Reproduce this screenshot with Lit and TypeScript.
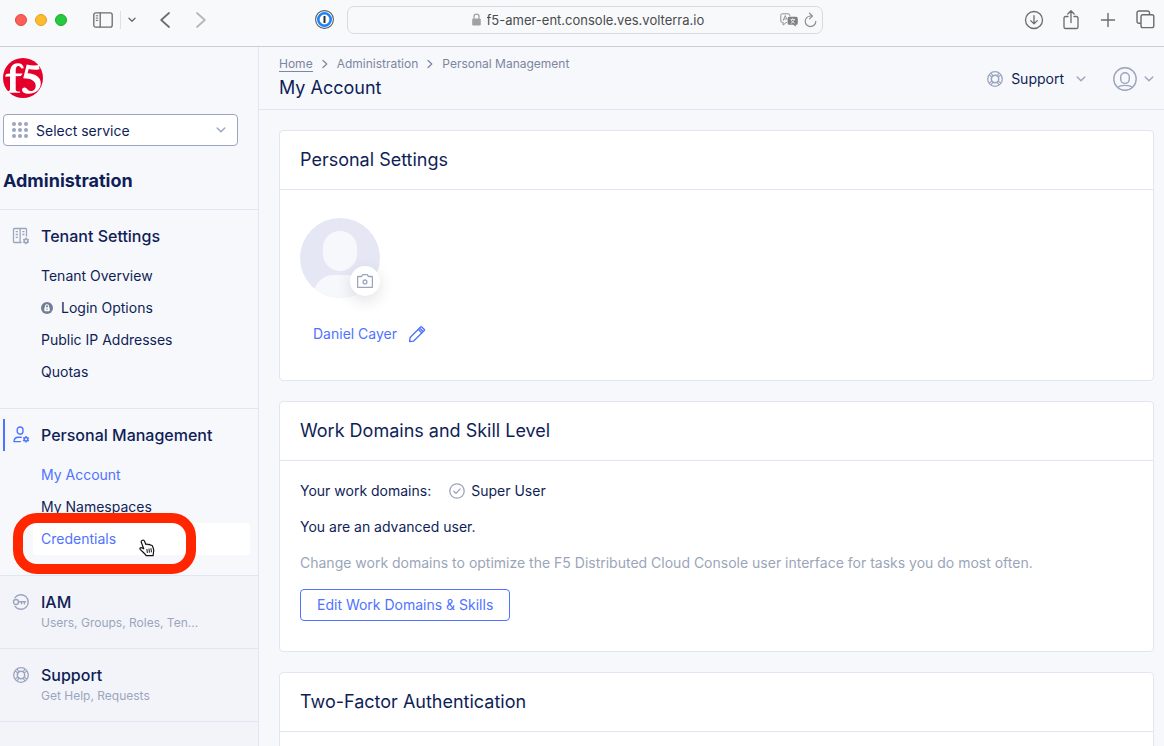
import { LitElement, html, css, svg } from "lit";
import { customElement, state } from "lit/decorators.js";
import { classMap } from "lit/directives/class-map.js";

const chevronDown = html`<svg class="chev" width="10" height="6" viewBox="0 0 10 6" fill="none" stroke="currentColor" stroke-width="1.4" stroke-linecap="round" stroke-linejoin="round" aria-hidden="true"><path d="M1.2 1 5 4.8 8.8 1" /></svg>`;

const gear = svg`<path d="M13 9.6v1.1M13 15.1v1.1M10.2 11.3l.9.5M14.9 13.9l.9.6M10.2 14.5l.9-.6M14.9 11.8l.9-.5" stroke-width="1.5" stroke-linecap="butt" /><circle cx="13" cy="12.9" r="1.8" stroke-width="1.5" />`;

const icons = {
  tenant: html`<svg width="18" height="18" viewBox="0 0 18 18" fill="none" stroke="currentColor" stroke-width="1.3" aria-hidden="true"><path d="M14.5 9.400V2.300a.8.8 0 0 0-.8-.8H2.300a.8.8 0 0 0-.8.8v12.400a.8.8 0 0 0 .8.8h7.300M8.100 1.500v14M3.700 4.700h2.200M3.700 7.500h2.200M3.700 10.300h2.200M10.300 4.700h2.200M10.300 7.500h2.200" /><g transform="translate(1 1)">${gear}</g></svg>`,
  person: html`<svg width="18" height="18" viewBox="0 0 18 18" fill="none" stroke="currentColor" stroke-width="1.4" stroke-linecap="round" aria-hidden="true"><rect x="5.200" y="1" width="5.800" height="7.200" rx="2.900" /><path d="M2 15.600h6.400M2 15.600c.2-3 2-4.400 4.300-4.400h3" /><g transform="translate(1 .4)">${gear}</g></svg>`,
  key: html`<svg width="18" height="18" viewBox="0 0 18 18" fill="none" stroke="currentColor" stroke-width="1.4" stroke-linecap="round" aria-hidden="true"><path d="M3 4.700A7.300 7.300 0 1 1 3 13.300" /><circle cx="4" cy="9" r="2.500" /><path d="M6.600 8.700h6.900M9.600 8.900v1.900M12.400 8.900v1.900" /></svg>`,
  ring: html`<svg width="18" height="18" viewBox="0 0 18 18" fill="none" stroke="currentColor" stroke-width="1.3" aria-hidden="true"><circle cx="9" cy="9" r="7.300" /><circle cx="9" cy="9" r="3.700" stroke-width="1.500" /><path d="M4.800 2.900 7 5.900M2.900 4.800 5.900 7M13.200 2.900 11 5.900M15.100 4.800 12.100 7M4.800 15.100 7 12.100M2.900 13.200 5.900 11M13.200 15.100 11 12.100M15.100 13.200 12.100 11" stroke-width="1.100" /></svg>`,
};

interface NavItem { label: string; locked?: boolean; }
interface NavSection { title: string; icon: keyof typeof icons; items?: NavItem[]; summary?: string; }

const SECTIONS: NavSection[] = [
  { title: "Tenant Settings", icon: "tenant", items: [{ label: "Tenant Overview" }, { label: "Login Options", locked: true }, { label: "Public IP Addresses" }, { label: "Quotas" }] },
  { title: "Personal Management", icon: "person", items: [{ label: "My Account" }, { label: "My Namespaces" }, { label: "Credentials" }] },
  { title: "IAM", icon: "key", summary: "Users, Groups, Roles, Ten..." },
  { title: "Support", icon: "ring", summary: "Get Help, Requests" },
];

const base = css`
  :host, * { box-sizing: border-box; }
  button { font: inherit; color: inherit; background: none; border: 0; padding: 0; cursor: pointer; }
  a { color: inherit; text-decoration: none; }
  svg { display: block; flex: none; }
`;

@customElement("browser-toolbar")
class BrowserToolbar extends LitElement {
  static styles = [base, css`
    :host { display: block; }
    .bar { display: grid; grid-template-columns: 1fr minmax(0, 476px) 1fr; align-items: center; height: 47px; padding: 0 9px 7px 15px; border-bottom: 1px solid #ccced1; background: #f8f9fb; color: #6b6c6e; }
    .side { display: flex; align-items: center; }
    .lights { display: flex; gap: 8px; }
    .light { width: 12px; height: 12px; border-radius: 50%; border: 1px solid #e2463f; background: #fe5f57; }
    .light.min { background: #febb2e; border-color: #e0a02a; }
    .light.max { background: #28c840; border-color: #1aab29; }
    .panel { margin-left: 26px; }
    .rule { width: 1px; height: 18px; margin: 0 7px; background: #dfe0e3; }
    .back { margin-left: 24px; }
    .forward { margin-left: 26px; color: #b4b5b8; }
    .vault { margin: 0 13px 0 auto; }
    .address { display: flex; align-items: center; justify-content: center; position: relative; height: 28px; border: 1px solid #d9dadd; border-radius: 7px; }
    .address label { display: flex; align-items: center; gap: 6px; padding-left: 8px; color: #a0a1a3; }
    .url { width: 220px; height: 20px; padding: 0; border: 0; outline: 0; background: none; color: #4a4b4d; font: 13px/20px Inter, sans-serif; }
    .tools { display: flex; align-items: center; gap: 6px; position: absolute; right: 5px; color: #8e8f91; }
    .right { justify-content: flex-end; gap: 18px; }
  `];

  render() {
    return html`<div class="bar">
      <div class="side">
        <div class="lights"><span class="light"></span><span class="light min"></span><span class="light max"></span></div>
        <button class="panel" aria-label="Sidebar"><svg width="20" height="16" viewBox="0 0 20 16" fill="none" stroke="currentColor" stroke-width="1.300"><rect x=".8" y=".8" width="18.400" height="14.400" rx="2" /><path d="M7.200.8v14.400" /><path d="M2.800 3.800h2.400M2.800 6.100h2.400M2.800 8.400h2.400" stroke-width="1" /></svg></button>
        <span class="rule"></span>
        <button aria-label="Tab groups"><svg width="8" height="6" viewBox="0 0 8 6" fill="none" stroke="currentColor" stroke-width="1.400" stroke-linecap="round" stroke-linejoin="round"><path d="M1 1.200 4 4.200 7 1.200" /></svg></button>
        <button class="back" aria-label="Back"><svg width="10" height="16" viewBox="0 0 10 16" fill="none" stroke="currentColor" stroke-width="1.700" stroke-linecap="round" stroke-linejoin="round"><path d="M9 1 1.200 8 9 15" /></svg></button>
        <button class="forward" aria-label="Forward"><svg width="10" height="16" viewBox="0 0 10 16" fill="none" stroke="currentColor" stroke-width="1.700" stroke-linecap="round" stroke-linejoin="round"><path d="M1 1 8.800 8 1 15" /></svg></button>
        <button class="vault" aria-label="Passwords"><svg width="19" height="19" viewBox="0 0 19 19"><circle cx="9.500" cy="9.500" r="8.900" fill="#fff" stroke="#55585c" stroke-width="1.100" /><circle cx="9.500" cy="9.500" r="6.200" fill="#fff" stroke="#1a84f5" stroke-width="2.600" /><rect x="8.500" y="6" width="2" height="7" rx=".5" fill="#2b2c2e" /></svg></button>
      </div>
      <div class="address">
        <label><svg width="9" height="13" viewBox="0 0 9 13"><rect x=".2" y="5.400" width="8.600" height="7" rx="1.200" fill="currentColor" /><path d="M2 5.800V3.600a2.500 2.500 0 0 1 5 0v2.200" fill="none" stroke="currentColor" stroke-width="1.300" /></svg>
          <input class="url" aria-label="Address" value="f5-amer-ent.console.ves.volterra.io" /></label>
        <div class="tools">
          <button aria-label="Translate"><svg width="18" height="14" viewBox="0 0 18 14"><path d="M7 9.500H6.200L3.200 12V9.500H2.400A1.600 1.600 0 0 1 .8 7.900V2.400A1.600 1.600 0 0 1 2.400.8h5.800a1.600 1.600 0 0 1 1.600 1.600v.8" fill="none" stroke="currentColor" /><path d="M3 7.800 5.200 2.600 6.800 6.400M3.800 6h2.600" fill="none" stroke="currentColor" stroke-width=".9" /><path d="M9.200 3.800h7a1.600 1.600 0 0 1 1.600 1.600v4.800a1.600 1.600 0 0 1-1.600 1.600h-.4v2l-2.400-2H9.200a1.600 1.600 0 0 1-1.600-1.600V5.400a1.600 1.600 0 0 1 1.600-1.600z" fill="#808183" /><path d="M10.400 6.400h4.600M12.700 5.300v1.100M14.300 6.400c-.5 1.900-1.700 3.100-3.600 3.900M11.200 6.900c.7 1.500 1.900 2.700 3.500 3.300" fill="none" stroke="#f8f9fb" stroke-width=".8" /></svg></button>
          <button aria-label="Reload"><svg width="13" height="16" viewBox="0 0 13 16" fill="none" stroke="currentColor" stroke-width="1.200" stroke-linecap="round" stroke-linejoin="round"><path d="M7.800 4H6.500a5.300 5.300 0 1 0 5.300 5.300M5.500 1.200 8.400 4 5.500 6.900" /></svg></button>
        </div>
      </div>
      <div class="side right">
        <button aria-label="Downloads"><svg width="20" height="20" viewBox="0 0 20 20" fill="none" stroke="currentColor" stroke-width="1.300" stroke-linecap="round" stroke-linejoin="round"><circle cx="10" cy="10" r="8.500" /><path d="M10 5.600v8M6.700 10.600 10 13.900l3.300-3.300" /></svg></button>
        <button aria-label="Share"><svg width="18" height="22" viewBox="0 0 18 22" fill="none" stroke="currentColor" stroke-width="1.300" stroke-linecap="round" stroke-linejoin="round"><path d="M6 7.500H3.600a1.600 1.600 0 0 0-1.600 1.600v8.800a1.600 1.600 0 0 0 1.600 1.600h10.800a1.600 1.600 0 0 0 1.600-1.600V9.100a1.600 1.600 0 0 0-1.600-1.600H12M9 13.500V2M5.800 5 9 1.800 12.200 5" /></svg></button>
        <button aria-label="New tab"><svg width="20" height="16" viewBox="0 0 20 16" fill="none" stroke="currentColor" stroke-width="1.400" stroke-linecap="round"><path d="M10 1.500v13M3.500 8h13" /></svg></button>
        <button aria-label="Tab overview"><svg width="19" height="19" viewBox="0 0 19 19" fill="none" stroke="currentColor" stroke-width="1.400"><path d="M4.800 13.300H2.900A1.900 1.900 0 0 1 1 11.400V2.900A1.900 1.900 0 0 1 2.900 1h8.700a1.900 1.900 0 0 1 1.900 1.900v1.600" /><rect x="5" y="4.800" width="12.800" height="12.800" rx="1.900" /></svg></button>
      </div>
    </div>`;
  }
}

@customElement("side-nav")
class SideNav extends LitElement {
  @state() private current = "My Account";
  @state() private pointed = "Credentials";

  static styles = [base, css`
    :host { display: flex; flex-direction: column; width: 259px; flex: none; border-right: 1px solid #e2e5f3; background: #f3f4f9; color: #0f1e57; font: 14px/20px Inter, sans-serif; overflow: hidden; }
    .top { padding: 11px 20px 14px 3px; background: #f7f8fb; }
    .picker { display: flex; align-items: center; height: 32px; margin: 16px 0 21px; padding: 0 11px 0 8px; border: 1px solid #9ba5bd; border-radius: 4px; background: #fff; color: #9ba5bd; }
    .picker select { flex: 1; min-width: 0; height: 30px; margin-left: 8px; padding: 2px 0 0; border: 0; outline: 0; appearance: none; background: none; color: #0f1e57; font: 14px/20px Inter, sans-serif; }
    h2 { margin: 0; font-size: 18px; line-height: 28px; font-weight: 700; }
    .section { border-top: 1px solid #e2e5f3; background: #f7f8fb; padding: 10px 0 20px; }
    .head { display: flex; align-items: center; width: 100%; height: 32px; margin-bottom: 8px; padding-left: 12px; gap: 11px; color: #9ba5bd; text-align: left; }
    .head.active { color: #4f73ff; margin-left: 3px; padding-left: 7px; border-left: 2px solid #4f73ff; }
    .title { display: block; color: #0f1e57; font-size: 16px; line-height: 22px; font-weight: 500; }
    .items { margin: 0; padding: 0 8px 0 33px; list-style: none; }
    .item { position: relative; }
    .link { display: flex; align-items: center; gap: 8px; height: 32px; padding-left: 8px; border-radius: 4px; }
    .link.current { color: #4f73ff; }
    .link.pointed { color: #4f73ff; background: #fff; }
    .marker { position: absolute; left: -20px; top: -10px; width: 183px; height: 61px; border: 10px solid #ff2600; border-radius: 24px; pointer-events: none; }
    .hand { position: absolute; left: 106px; top: 16px; pointer-events: none; }
    .folded { display: flex; gap: 11px; width: 100%; height: 73px; padding: 15px 12px; border-top: 1px solid #e2e5f3; color: #9ba5bd; text-align: left; }
    .folded svg { margin-top: 2px; }
    .summary { display: block; white-space: nowrap; font-size: 12px; line-height: 20px; color: #9ba5bd; }
    .rest { flex: 1; border-top: 1px solid #e2e5f3; }
  `];

  private item(i: NavItem) {
    const pointed = this.pointed === i.label;
    return html`<li class="item">
      <a href="#" class=${classMap({ link: true, current: this.current === i.label, pointed })}>
        ${i.locked ? html`<svg width="12" height="12" viewBox="0 0 12 12" aria-hidden="true"><circle cx="6" cy="6" r="6" fill="#737d96" /><rect x="3.300" y="5.300" width="5.400" height="3.900" rx=".7" fill="#fff" /><path d="M4.500 5.500V4.200a1.500 1.500 0 0 1 3 0v1.300" fill="none" stroke="#fff" stroke-width="1.100" /><circle cx="6" cy="7.200" r=".7" fill="#737d96" /></svg>` : ""}${i.label}</a>
      ${pointed ? html`<span class="marker"></span>
        <svg class="hand" width="17" height="18" viewBox="0 0 17 18" aria-hidden="true"><path d="M3.400 1.300c.9-.4 1.700.1 2.100 1l1.400 3.200c.7-.8 1.700-.6 2.200.2.700-.6 1.700-.4 2.200.5.900-.5 1.900.1 2.200 1 .7 2 1.800 3.700 1 6.100l-.4 3.400H7.200C6.200 14.700 3.300 12.600 1.200 10.300c-.7-.9.300-2 1.500-1.500l2 1L2.300 3.200c-.3-.8.200-1.600 1.100-1.900z" fill="#fff" stroke="#111" stroke-width="1.200" stroke-linejoin="round" /><path d="M7.900 10.400l.4 3.200M10 10l.4 3.300M12 9.600l.4 3.300" stroke="#111" stroke-linecap="round" /></svg>` : ""}
    </li>`;
  }

  private section(s: NavSection) {
    if (!s.items) {
      return html`<button class="folded">${icons[s.icon]}<span><span class="title">${s.title}</span><span class="summary">${s.summary}</span></span></button>`;
    }
    const active = s.items.some((i) => i.label === this.current);
    return html`<div class="section">
      <button class=${classMap({ head: true, active })}>${icons[s.icon]}<span class="title">${s.title}</span></button>
      <ul class="items">${s.items.map((i) => this.item(i))}</ul>
    </div>`;
  }

  render() {
    return html`
      <div class="top">
        <svg width="40" height="40" viewBox="0 0 40 40" role="img" aria-label="f5"><circle cx="20" cy="20" r="20" fill="#e4002b" /><path d="M20.800 10.200C20.300 6.800 18 5 14.500 5.200 9.300 5.500 7 9.200 7 14.600v.9L3 16.100l-.8 2.700L7 18.500v12.400c0 1.700-.6 2.200-3.400 2.600l1.200 1.300h12.300l-.1-1.200c-3.500-.4-4.300-.8-4.300-2.700V18.300l5.200-.2 1.700-2.600h-6.900v-2.700c0-3.200.9-4.900 2.600-4.900 1.800 0 2.400 1.500 3.100 2.700z" fill="#fff" /><path d="M23.700 6.400c4.600 1.100 8.300 1.300 12 .6l.9 4.300c-3.800.8-7.600.6-10.900-.3l-1.100 4.300c8 .5 13.400 4.200 13.200 10.100-.2 6.300-6 10.600-12.700 10.300-3.500-.2-6-1.500-6.100-3.500-.1-1.500 1.200-2.700 2.700-2.600 2.600.1 2.800 3.500 6 3.500 3 0 5-2.200 5-5.400 0-4.800-4.700-7.300-12.500-7.400z" fill="#fff" /></svg>
        <label class="picker">
          <svg width="16" height="16" viewBox="0 0 16 16" fill="currentColor" aria-hidden="true">${[2, 8, 14].map((y) => [2, 8, 14].map((x) => svg`<circle cx=${x} cy=${y} r="2" />`))}</svg>
          <select aria-label="Service"><option>Select service</option></select>
          ${chevronDown}
        </label>
        <h2>Administration</h2>
      </div>
      ${SECTIONS.map((s) => this.section(s))}
      <div class="rest"></div>`;
  }
}

@customElement("account-page")
class AccountPage extends LitElement {
  static styles = [base, css`
    :host { display: flex; flex-direction: column; flex: 1; min-width: 0; background: #f7f8fb; color: #0f1e57; font: 14px/20px Inter, sans-serif; }
    header { display: flex; justify-content: space-between; align-items: center; padding: 8px 10px 6px 20px; border-bottom: 1px solid #e2e5f3; }
    .crumbs { display: flex; align-items: center; gap: 9px; height: 18px; font-size: 12px; line-height: 14px; color: #7b86a0; }
    .crumbs .home { border-bottom: 1px solid #7b86a0; }
    h1 { margin: 0; font-size: 18px; line-height: 30px; font-weight: 400; }
    .menus { display: flex; align-items: center; gap: 27px; color: #9ba5bd; }
    .menu { display: flex; align-items: center; gap: 7px; color: #9ba5bd; }
    .menu span { color: #0f1e57; margin-right: 5px; }
    main { flex: 1; min-height: 0; display: flex; flex-direction: column; gap: 20px; padding: 20px 10px 20px 20px; overflow: auto; scrollbar-width: none; }
    .card { flex: none; border: 1px solid #e2e5f3; border-radius: 4px; background: #fff; }
    h3 { margin: 0; padding: 14px 20px; font-size: 18px; line-height: 30px; font-weight: 400; border-bottom: 1px solid #e2e5f3; }
    .body { padding: 20px 20px 30px; display: flex; flex-direction: column; align-items: flex-start; gap: 16px; }
    .profile { padding: 28px 20px 26px; }
    .portrait { position: relative; }
    .camera { position: absolute; right: 0; bottom: 2px; width: 30px; height: 30px; display: grid; place-items: center; border-radius: 50%; background: #fff; color: #9ba5bd; box-shadow: 0 5px 15px rgba(40, 45, 70, 0.14); }
    .name { display: flex; align-items: center; gap: 11px; height: 40px; padding: 0 13px; color: #4f73ff; }
    p { margin: 0; }
    .domains { display: flex; align-items: center; gap: 18px; }
    .domain { display: flex; align-items: center; gap: 6px; }
    .domain svg { color: #9ba5bd; }
    .muted { color: #9ba5b9; }
    .edit { height: 32px; padding: 0 16px; border: 1px solid #4f73ff; border-radius: 4px; background: #fff; color: #4f73ff; }
  `];

  render() {
    const sep = html`<svg width="6" height="10" viewBox="0 0 6 10" fill="none" stroke="currentColor" stroke-width="1.200" stroke-linecap="round" stroke-linejoin="round" aria-hidden="true"><path d="M1 1.500 4.800 5 1 8.500" /></svg>`;
    return html`
      <header>
        <div>
          <nav class="crumbs"><a href="#" class="home">Home</a>${sep}<a href="#">Administration</a>${sep}<a href="#">Personal Management</a></nav>
          <h1>My Account</h1>
        </div>
        <div class="menus">
          <button class="menu">${icons.ring}<span>Support</span>${chevronDown}</button>
          <button class="menu" aria-label="Account"><svg width="24" height="24" viewBox="0 0 24 24" fill="none" stroke="currentColor" stroke-width="1.400"><circle cx="12" cy="12" r="11.200" /><rect x="7.700" y="5.800" width="8.600" height="10.600" rx="4.300" /><path d="M4.800 20.400c1.500-1.700 3.600-2 7.200-2s5.700.3 7.200 2" /></svg>${chevronDown}</button>
        </div>
      </header>
      <main>
        <section class="card">
          <h3>Personal Settings</h3>
          <div class="body profile">
            <div class="portrait">
              <svg width="80" height="80" viewBox="0 0 80 80" role="img" aria-label="Profile picture"><defs><clipPath id="disc"><circle cx="40" cy="40" r="40" /></clipPath></defs><g clip-path="url(#disc)"><rect width="80" height="80" fill="#e5e8f4" /><rect x="23" y="13" width="34" height="40" rx="17" fill="#f7f8fb" /><path d="M12 80C14 64 24 57 34 57h12c10 0 20 7 22 23z" fill="#f7f8fb" /></g></svg>
              <button class="camera" aria-label="Change picture"><svg width="16" height="16" viewBox="0 0 16 16" fill="none" stroke="currentColor" stroke-width="1.300" stroke-linejoin="round"><path d="M1 3.500h3.600L5.800 1.600h4.400l1.200 1.900H15a.4.4 0 0 1 .4.400v10a.4.400 0 0 1-.4.400H1a.4.400 0 0 1-.4-.4v-10a.4.400 0 0 1 .4-.4z" /><circle cx="8" cy="8.900" r="1.900" /></svg></button>
            </div>
            <button class="name">Daniel Cayer<svg width="18" height="18" viewBox="0 0 18 18" fill="none" stroke="currentColor" stroke-width="1.400" stroke-linejoin="round" aria-hidden="true"><path d="M1.600 16.500l.5-4L12.600 1.900a.8.8 0 0 1 1.100 0l2.600 2.600a.8.8 0 0 1 0 1.100L5.700 16.100z" /><path d="M10.200 4.300l3.700 3.700M12 3.400l2.900 2.900" /></svg></button>
          </div>
        </section>
        <section class="card">
          <h3>Work Domains and Skill Level</h3>
          <div class="body">
            <div class="domains"><span>Your work domains:</span><span class="domain"><svg width="16" height="16" viewBox="0 0 16 16" fill="none" stroke="currentColor" stroke-width="1.300" stroke-linecap="round" stroke-linejoin="round" aria-hidden="true"><circle cx="8" cy="8" r="7.200" /><path d="M4.800 8.200 7 10.400 11.200 5.900" /></svg>Super User</span></div>
            <p>You are an advanced user.</p>
            <p class="muted">Change work domains to optimize the F5 Distributed Cloud Console user interface for tasks you do most often.</p>
            <button class="edit">Edit Work Domains &amp; Skills</button>
          </div>
        </section>
        <section class="card">
          <h3>Two-Factor Authentication</h3>
          <div class="body"></div>
        </section>
      </main>`;
  }
}

@customElement("app-root")
class AppRoot extends LitElement {
  static styles = css`
    :host { display: flex; flex-direction: column; height: 100vh; overflow: hidden; }
    .console { display: flex; flex: 1; min-height: 0; }
  `;

  render() {
    return html`<browser-toolbar></browser-toolbar><div class="console"><side-nav></side-nav><account-page></account-page></div>`;
  }
}
